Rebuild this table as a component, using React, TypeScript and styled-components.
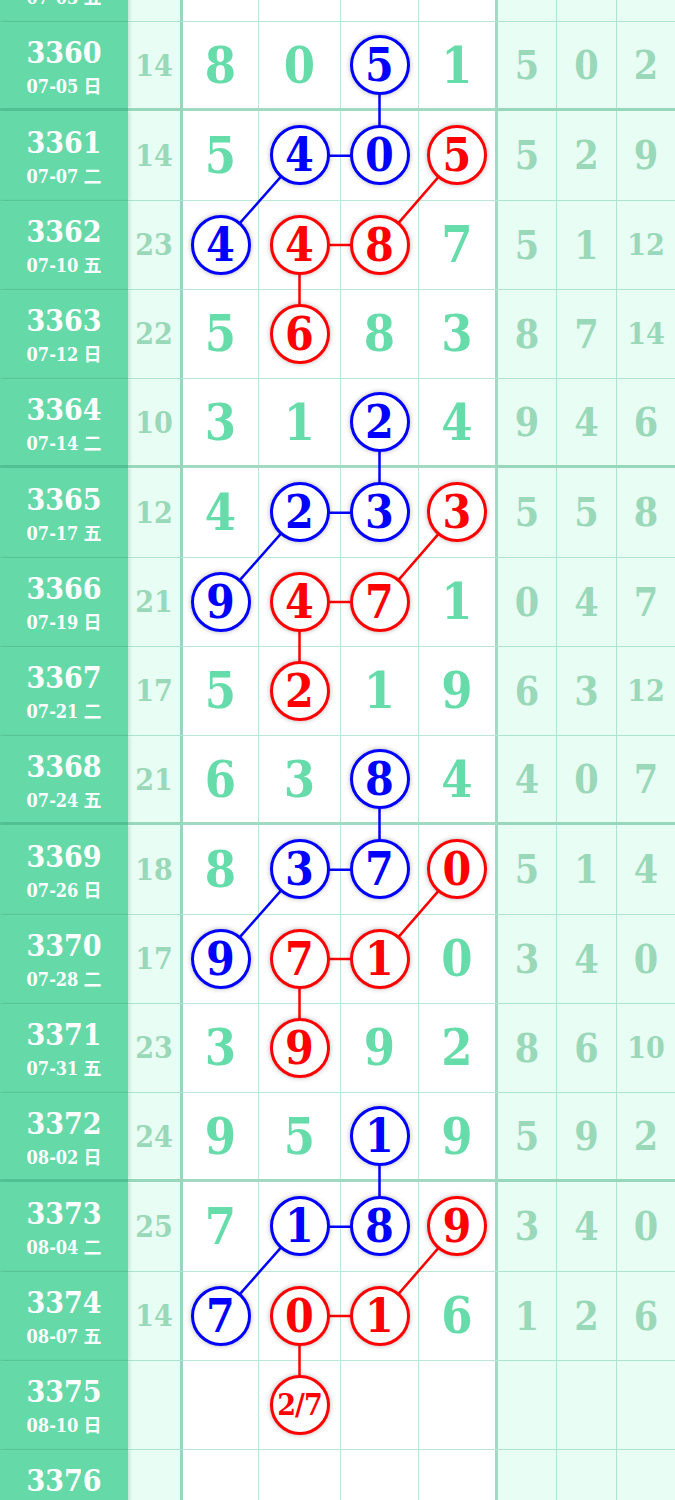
import React from "react";
import styled, { createGlobalStyle } from "styled-components";

const RH = 89.25;
const TOP = -67.25;
const COLS = [128, 55, 76, 82, 78, 79, 59, 60, 58];
const CX = [220.5, 299.5, 379.5, 457];

const GlobalStyle = createGlobalStyle`
	html, body {
		margin: 0;
		padding: 0;
		overflow: hidden;
		background: #ffffff;
	}
	body {
		font-family: "DejaVu Serif Condensed", "DejaVu Serif", "Noto Sans CJK SC", serif;
	}
`;

const Table = styled.div`
	position: relative;
	width: 675px;
	margin-top: ${TOP}px;
`;

const Row = styled.div<{ $thick: boolean }>`
	display: grid;
	grid-template-columns: ${COLS.map((c) => c + "px").join(" ")};
	height: ${RH}px;
	box-sizing: border-box;
	background: linear-gradient(
		to right,
		#66d9a9 128px,
		#e8fdf3 128px 183px,
		#ffffff 183px 498px,
		#e8fdf3 498px
	);
	border-bottom: ${(p) =>
		p.$thick
			? "3px solid rgba(70, 180, 135, 0.5)"
			: "1px solid rgba(90, 195, 150, 0.42)"};
`;

const NameCell = styled.div`
	background: #66d9a9;
	color: #ffffff;
	display: flex;
	flex-direction: column;
	align-items: center;
	justify-content: center;
	box-shadow: 2px 0 3px rgba(40, 120, 90, 0.18);
	position: relative;
	z-index: 1;
	padding-top: 4px;
`;

const Issue = styled.div`
	font-size: 30px;
	line-height: 36px;
	font-weight: bold;
`;

const DateLine = styled.div`
	font-size: 18px;
	line-height: 26px;
	font-weight: bold;
	margin-top: 1px;
`;

const Week = styled.span`
	font-family: "Noto Sans CJK SC", sans-serif;
	font-weight: bold;
	margin-left: 5px;
`;

const SumCell = styled.div`
	background: #e8fdf3;
	border-right: 3px solid rgba(70, 180, 135, 0.5);
	color: #99d8b8;
	font-weight: bold;
	font-size: 30px;
	display: flex;
	align-items: center;
	justify-content: center;
`;

const DigitCell = styled.div<{ $last?: boolean }>`
	background: #ffffff;
	border-right: ${(p) =>
		p.$last
			? "3px solid rgba(70, 180, 135, 0.5)"
			: "1px solid rgba(90, 195, 150, 0.42)"};
	color: #66dcaa;
	font-weight: bold;
	font-size: 50px;
	display: flex;
	align-items: center;
	justify-content: center;
`;

const ExtraCell = styled.div<{ $wide: boolean; $last?: boolean }>`
	background: #e8fdf3;
	border-right: ${(p) =>
		p.$last ? "none" : "1px solid rgba(90, 195, 150, 0.42)"};
	color: #99d8b8;
	font-weight: bold;
	font-size: ${(p) => (p.$wide ? "30px" : "39px")};
	display: flex;
	align-items: center;
	justify-content: center;
`;

const Ball = styled.div<{ $color: string; $small?: boolean }>`
	position: relative;
	z-index: 3;
	width: 60px;
	height: 60px;
	box-sizing: border-box;
	border: 3px solid ${(p) => p.$color};
	border-radius: 50%;
	background: #ffffff;
	color: ${(p) => p.$color};
	font-size: ${(p) => (p.$small ? "30px" : "46px")};
	letter-spacing: ${(p) => (p.$small ? "-1px" : "0")};
	font-weight: bold;
	display: flex;
	align-items: center;
	justify-content: center;
	box-shadow: 0 0 5px rgba(0, 0, 0, 0.3);
`;

const Links = styled.svg`
	position: absolute;
	left: 0;
	top: 0;
	z-index: 2;
	pointer-events: none;
`;

type RowData = [string, string, string, string, string[], string[]];

const rows: RowData[] = [
	["3359", "07-03", "五", "", ["", "", "", ""], ["", "", ""]],
	["3360", "07-05", "日", "14", ["8", "0", "5b", "1"], ["5", "0", "2"]],
	["3361", "07-07", "二", "14", ["5", "4b", "0b", "5r"], ["5", "2", "9"]],
	["3362", "07-10", "五", "23", ["4b", "4r", "8r", "7"], ["5", "1", "12"]],
	["3363", "07-12", "日", "22", ["5", "6r", "8", "3"], ["8", "7", "14"]],
	["3364", "07-14", "二", "10", ["3", "1", "2b", "4"], ["9", "4", "6"]],
	["3365", "07-17", "五", "12", ["4", "2b", "3b", "3r"], ["5", "5", "8"]],
	["3366", "07-19", "日", "21", ["9b", "4r", "7r", "1"], ["0", "4", "7"]],
	["3367", "07-21", "二", "17", ["5", "2r", "1", "9"], ["6", "3", "12"]],
	["3368", "07-24", "五", "21", ["6", "3", "8b", "4"], ["4", "0", "7"]],
	["3369", "07-26", "日", "18", ["8", "3b", "7b", "0r"], ["5", "1", "4"]],
	["3370", "07-28", "二", "17", ["9b", "7r", "1r", "0"], ["3", "4", "0"]],
	["3371", "07-31", "五", "23", ["3", "9r", "9", "2"], ["8", "6", "10"]],
	["3372", "08-02", "日", "24", ["9", "5", "1b", "9"], ["5", "9", "2"]],
	["3373", "08-04", "二", "25", ["7", "1b", "8b", "9r"], ["3", "4", "0"]],
	["3374", "08-07", "五", "14", ["7b", "0r", "1r", "6"], ["1", "2", "6"]],
	["3375", "08-10", "日", "", ["", "2/7r", "", ""], ["", "", ""]],
	["3376", "08-12", "三", "", ["", "", "", ""], ["", "", ""]],
];

const BLUE = "#0000ff";
const RED = "#ff0000";

// group starts: 3360, 3364, 3368, 3372
const groups = [1, 5, 9, 13];
type Edge = [number, number, number, number, string];
const edges: Edge[] = groups.flatMap((g) => [
	[g, 2, g + 1, 2, BLUE],
	[g + 1, 1, g + 1, 2, BLUE],
	[g + 1, 1, g + 2, 0, BLUE],
	[g + 1, 3, g + 2, 2, RED],
	[g + 2, 1, g + 2, 2, RED],
	[g + 2, 1, g + 3, 1, RED],
] as Edge[]);

const cy = (i: number) => i * RH + RH / 2 - 0.5;

function renderDigit(v: string) {
	if (!v) return null;
	const tag = v.slice(-1);
	if (tag === "b" || tag === "r") {
		const text = v.slice(0, -1);
		return (
			<Ball $color={tag === "b" ? BLUE : RED} $small={text.length > 1}>
				{text}
			</Ball>
		);
	}
	return v;
}

function App() {
	return (
		<>
			<GlobalStyle />
			<Table>
				<Links width={675} height={rows.length * RH}>
					{edges.map(([r1, c1, r2, c2, color], i) => (
						<line
							key={i}
							x1={CX[c1]}
							y1={cy(r1)}
							x2={CX[c2]}
							y2={cy(r2)}
							stroke={color}
							strokeWidth={2.5}
						/>
					))}
				</Links>
				{rows.map(([no, date, wd, sum, digits, extra]) => (
					<Row key={no} $thick={(Number(no) - 3360) % 4 === 0}>
						<NameCell>
							<Issue>{no}</Issue>
							<DateLine>
								{date}
								<Week>{wd}</Week>
							</DateLine>
						</NameCell>
						<SumCell>{sum}</SumCell>
						{digits.map((d, i) => (
							<DigitCell key={i} $last={i === 3}>
								{renderDigit(d)}
							</DigitCell>
						))}
						{extra.map((e, i) => (
							<ExtraCell key={i} $wide={e.length > 1} $last={i === 2}>
								{e}
							</ExtraCell>
						))}
					</Row>
				))}
			</Table>
		</>
	);
}

export default App;
